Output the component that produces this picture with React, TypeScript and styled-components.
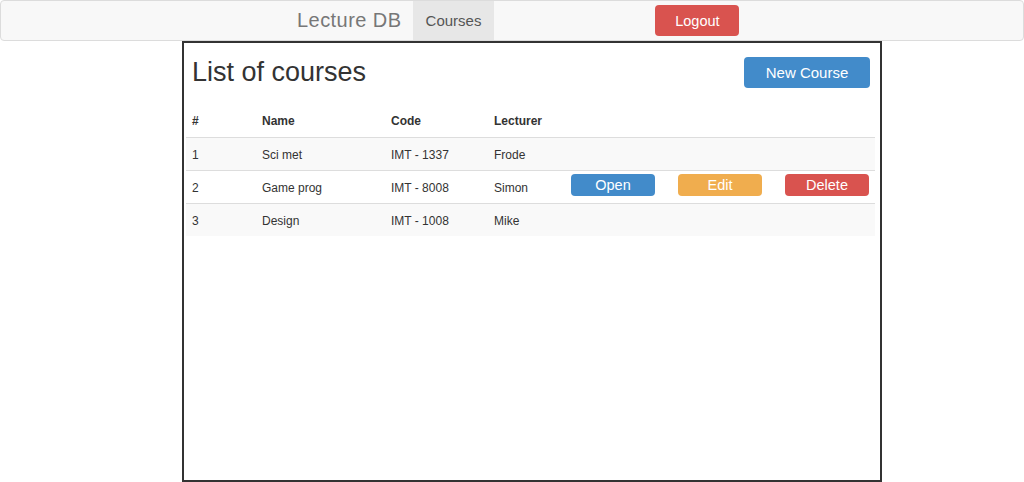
import React from 'react';
import styled, { createGlobalStyle } from 'styled-components';

const GlobalStyle = createGlobalStyle`
  body {
    margin: 0;
    background: #fff;
    font-family: 'Liberation Sans', Arial, Helvetica, sans-serif;
    color: #333;
  }
`;

const COLUMNS = '70px 129px 103px 77px 107px 107px 1fr';

const colors = {
  primary: '#428bca',
  warning: '#f0ad4e',
  danger: '#d9534f',
};

type Variant = keyof typeof colors;

const Navbar = styled.nav`
  height: 41px;
  box-sizing: border-box;
  background: #f8f8f8;
  border: 1px solid #dcdcdc;
  border-radius: 4px;
  display: flex;
`;

const NavInner = styled.div`
  display: flex;
  align-items: stretch;
  margin-left: 296px;
`;

const Brand = styled.span`
  display: flex;
  align-items: center;
  font-size: 20px;
  letter-spacing: 0.45px;
  color: #777;
  padding-right: 11px;
`;

const NavLink = styled.span<{ active?: boolean }>`
  display: flex;
  align-items: center;
  padding: 0 13px;
  font-size: 15px;
  color: #555;
  background: ${(p) => (p.active ? '#e7e7e7' : 'transparent')};
`;

const Button = styled.button<{ variant: Variant; size?: 'sm' | 'md' }>`
  border: none;
  border-radius: 4px;
  background: ${(p) => colors[p.variant]};
  color: #fff;
  font-family: inherit;
  font-size: ${(p) => (p.size === 'sm' ? '14.5px' : '15px')};
  height: ${(p) => (p.size === 'sm' ? '22px' : '31px')};
  padding: 0;
  cursor: pointer;
  display: inline-flex;
  align-items: center;
  justify-content: center;
`;

const LogoutButton = styled(Button)`
  align-self: center;
  width: 84px;
  margin-left: 161px;
  font-size: 14.5px;
`;

const Panel = styled.main`
  box-sizing: border-box;
  width: 700px;
  height: 441px;
  margin-left: 182px;
  border: 2px solid #333;
  padding: 0 5px 0 2px;
`;

const TitleBar = styled.div`
  display: flex;
  justify-content: space-between;
  align-items: flex-start;
  padding: 14px 5px 0 6px;
  margin-bottom: 16px;
`;

const Title = styled.h2`
  margin: 0;
  font-size: 27px;
  line-height: 30px;
  font-weight: normal;
  color: #333;
`;

const NewButton = styled(Button)`
  width: 126px;
`;

const Table = styled.div`
  font-size: 12px;
`;

const Row = styled.div<{ striped?: boolean; header?: boolean }>`
  display: grid;
  grid-template-columns: ${COLUMNS};
  align-items: center;
  height: 33px;
  box-sizing: border-box;
  padding: 1px 0 0 6px;
  border-top: ${(p) => (p.header ? 'none' : '1px solid #ddd')};
  background: ${(p) => (p.striped ? '#f9f9f9' : 'transparent')};
  font-weight: ${(p) => (p.header ? 'bold' : 'normal')};
`;

const ActionCell = styled.span`
  display: flex;
  margin-bottom: 5px;
`;

const ActionButton = styled(Button)`
  width: 84px;
`;

const courses = [
  { id: 1, name: 'Sci met', code: 'IMT - 1337', lecturer: 'Frode' },
  { id: 2, name: 'Game prog', code: 'IMT - 8008', lecturer: 'Simon', actions: true },
  { id: 3, name: 'Design', code: 'IMT - 1008', lecturer: 'Mike' },
];

const App = () => {
  return (
    <>
      <GlobalStyle />
      <Navbar>
        <NavInner>
          <Brand>Lecture DB</Brand>
          <NavLink active>Courses</NavLink>
          <LogoutButton variant="danger">Logout</LogoutButton>
        </NavInner>
      </Navbar>
      <Panel>
        <TitleBar>
          <Title>List of courses</Title>
          <NewButton variant="primary">New Course</NewButton>
        </TitleBar>
        <Table>
          <Row header>
            <span>#</span>
            <span>Name</span>
            <span>Code</span>
            <span>Lecturer</span>
          </Row>
          {courses.map((c, i) => (
            <Row key={c.id} striped={i % 2 === 0}>
              <span>{c.id}</span>
              <span>{c.name}</span>
              <span>{c.code}</span>
              <span>{c.lecturer}</span>
              {c.actions && (
                <>
                  <ActionCell>
                    <ActionButton variant="primary" size="sm">Open</ActionButton>
                  </ActionCell>
                  <ActionCell>
                    <ActionButton variant="warning" size="sm">Edit</ActionButton>
                  </ActionCell>
                  <ActionCell>
                    <ActionButton variant="danger" size="sm">Delete</ActionButton>
                  </ActionCell>
                </>
              )}
            </Row>
          ))}
        </Table>
      </Panel>
    </>
  );
};

export default App;
